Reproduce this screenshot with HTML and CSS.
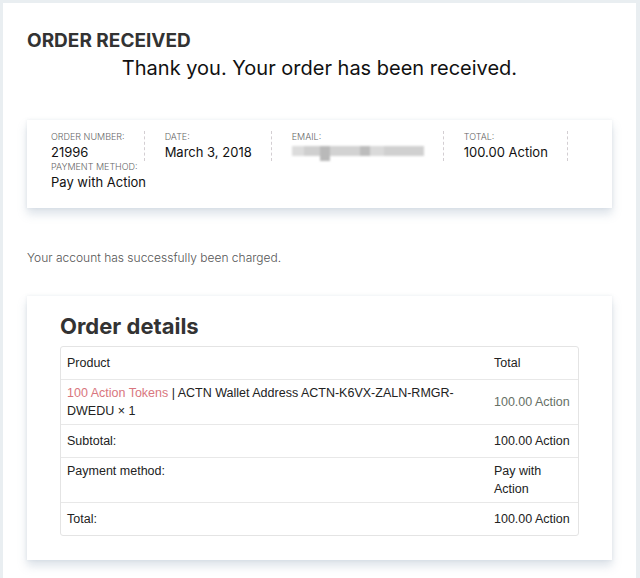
FILE: index.html
```html
<!DOCTYPE html>
<html>
<head>
<meta charset="utf-8">
<link rel="stylesheet" href="styles.css">
</head>
<body>
<div class="page">
  <h1 class="page-title">ORDER RECEIVED</h1>
  <p class="thanks">Thank you. Your order has been received.</p>

  <div class="card overview">
    <ul class="order-details">
      <li class="od-item">Order number:<strong>21996</strong></li>
      <li class="od-item">Date:<strong>March 3, 2018</strong></li>
      <li class="od-item">Email:<strong><span class="blur"><span class="b1"></span><span class="b2"></span><span class="b3"></span><span class="b4"></span><span class="b5"></span><span class="b6"></span><span class="b7"></span></span></strong></li>
      <li class="od-item">Total:<strong>100.00 Action</strong></li>
      <li class="od-item last">Payment method:<strong>Pay with Action</strong></li>
    </ul>
  </div>

  <p class="charged">Your account has successfully been charged.</p>

  <div class="card details">
    <h2 class="details-title">Order details</h2>
    <table class="order-table">
      <colgroup><col class="c1"><col class="c2"></colgroup>
      <thead>
        <tr><th class="cell">Product</th><th class="cell">Total</th></tr>
      </thead>
      <tbody>
        <tr class="tall"><td class="cell"><span class="plink">100 Action Tokens</span> | ACTN Wallet Address ACTN-K6VX-ZALN-RMGR-DWEDU <strong class="qty">× 1</strong></td><td class="cell muted">100.00 Action</td></tr>
      </tbody>
      <tfoot>
        <tr><th class="cell">Subtotal:</th><td class="cell">100.00 Action</td></tr>
        <tr class="tall"><th class="cell top">Payment method:</th><td class="cell">Pay with Action</td></tr>
        <tr><th class="cell">Total:</th><td class="cell">100.00 Action</td></tr>
      </tfoot>
    </table>
  </div>
</div>
</body>
</html>
```

FILE: styles.css
```css
html, body {
  margin: 0;
  padding: 0;
}
body {
  background: #e9eef1;
  font-family: Inter, "Noto Sans", sans-serif;
  color: #333;
}
.page {
  background: #fff;
  margin: 3px 4px 0 3px;
  padding: 27px 24px 24px 24px;
  min-height: 575px;
  box-sizing: border-box;
}
.page-title {
  margin: 0;
  font-size: 19px;
  line-height: 22px;
  font-weight: 700;
  color: #333;
}
.thanks {
  margin: 4px 0 0 0;
  font-size: 20px;
  line-height: 24px;
  color: #111;
  text-align: center;
}
.card {
  background: #fff;
  box-shadow: 0 6px 9px rgba(130, 150, 175, 0.28), 0 0 3px rgba(180, 190, 200, 0.25);
}
.overview {
  margin-top: 40px;
  padding: 11px 20px 17px 24px;
}
.order-details {
  list-style: none;
  margin: 0;
  padding: 0;
  display: flex;
  flex-wrap: wrap;
}
.od-item {
  text-transform: uppercase;
  font-size: 9px;
  line-height: 12px;
  font-weight: 300;
  color: #666;
  padding-right: 19px;
  margin-right: 20px;
  border-right: 1px dashed #d3ced2;
}
.od-item.last {
  border-right: none;
}
.od-item strong {
  display: block;
  text-transform: none;
  font-size: 13px;
  line-height: 18px;
  font-weight: 400;
  color: #111;
}
.blur {
  display: flex;
  align-items: flex-start;
  width: 132px;
  height: 18px;
  padding-top: 3px;
  box-sizing: border-box;
  filter: blur(1.2px);
}
.blur span {
  display: block;
  height: 10px;
}
.blur .b1 { width: 12px; background: #dcdcdc; }
.blur .b2 { width: 16px; background: #cfcfcf; }
.blur .b3 { width: 10px; background: #b9b9b9; height: 15px; }
.blur .b4 { width: 30px; background: #d2d2d2; }
.blur .b5 { width: 10px; background: #bcbcbc; }
.blur .b6 { width: 14px; background: #dadada; }
.blur .b7 { width: 40px; background: #d0d0d0; }
.charged {
  margin: 41px 0 0 0;
  font-size: 12px;
  line-height: 18px;
  font-weight: 300;
  color: #555;
}
.details {
  margin-top: 29px;
  padding: 16px 33px 24px 33px;
}
.details-title {
  margin: 0 0 6px 0;
  font-size: 22px;
  line-height: 28px;
  font-weight: 700;
  color: #333;
}
.order-table {
  width: 100%;
  border-collapse: separate;
  border-spacing: 0;
  border: 1px solid #e4e4e4;
  border-radius: 3px;
  table-layout: fixed;
  font-family: "Liberation Sans", Arial, sans-serif;
  font-size: 12.5px;
  line-height: 18px;
  color: #222;
}
.order-table .c2 { width: 90px; }
.cell {
  text-align: left;
  font-weight: 400;
  padding: 7px 4px 7px 6px;
  vertical-align: middle;
  border-top: 1px solid #e8e8e8;
}
thead .cell {
  border-top: none;
}
.tall .cell {
  padding-top: 4px;
  padding-bottom: 4px;
}
.cell.top {
  vertical-align: top;
}
.plink {
  color: #d9767e;
}
.qty {
  font-weight: 400;
}
.muted {
  color: #667066;
}
```
